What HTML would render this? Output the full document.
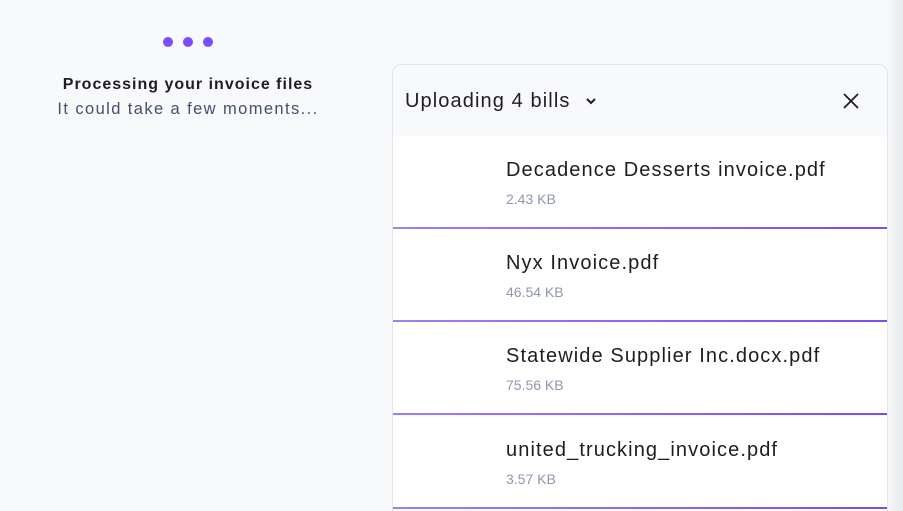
<!DOCTYPE html>
<html><head><style>
html,body{height:511px;overflow:hidden}
body{margin:0;width:903px;background:#f8f9fb;font-family:"Liberation Sans",sans-serif;position:relative}
.shade{position:absolute;right:0;top:0;width:18px;height:511px;background:linear-gradient(90deg,rgba(0,0,0,0),rgba(0,0,0,0.06))}
.dot{position:absolute;top:37px;width:10px;height:10px;border-radius:50%;background:#7c4dff}
.t1{position:absolute;left:0;width:376px;top:76px;text-align:center;font-weight:bold;font-size:16px;letter-spacing:1px;color:#1d1d22}
.t2{position:absolute;left:0;width:376px;top:100px;text-align:center;font-size:16.5px;letter-spacing:1.4px;color:#44506a}
.panel{position:absolute;left:392px;top:64px;width:494px;height:447px;border:1px solid #e2e5ec;border-bottom:0;border-radius:10px 10px 0 0;background:#f8f9fb;overflow:hidden}
.hd{height:70px;position:relative}
.hd .ti{position:absolute;left:12px;top:25px;font-size:20px;letter-spacing:1.1px;color:#1d1d22}
.row{position:absolute;left:0;width:494px;height:91px;background:#fff;border-bottom:2px solid;border-image:linear-gradient(90deg,#a07ff0,#7c4deb) 1}
.row .n{position:absolute;left:113px;top:23px;font-size:20px;letter-spacing:1.1px;color:#1d1d22}
.row .s{position:absolute;left:113px;top:55px;font-size:14px;color:#8e97ad}
</style></head><body>
<div class="shade"></div>
<div class="dot" style="left:163px"></div><div class="dot" style="left:183px"></div><div class="dot" style="left:203px"></div>
<div class="t1">Processing your invoice files</div>
<div class="t2">It could take a few moments...</div>
<div class="panel">
<div class="hd"><span class="ti">Uploading 4 bills</span>
<svg style="position:absolute;left:192px;top:31px" width="12" height="10" viewBox="0 0 12 10"><path d="M2 3l4 4 4-4" stroke="#1d1d22" stroke-width="2" fill="none"/></svg>
<svg style="position:absolute;left:449px;top:27px" width="18" height="18" viewBox="0 0 18 18"><path d="M2 2l14 14M16 2L2 16" stroke="#1d1d22" stroke-width="1.8"/></svg>
</div>
<div class="row" style="top:71px"><div class="n">Decadence Desserts invoice.pdf</div><div class="s">2.43 KB</div></div>
<div class="row" style="top:164px"><div class="n">Nyx Invoice.pdf</div><div class="s">46.54 KB</div></div>
<div class="row" style="top:257px"><div class="n">Statewide Supplier Inc.docx.pdf</div><div class="s">75.56 KB</div></div>
<div class="row" style="top:351px;height:91px"><div class="n">united_trucking_invoice.pdf</div><div class="s">3.57 KB</div></div>
</div>
</body></html>
